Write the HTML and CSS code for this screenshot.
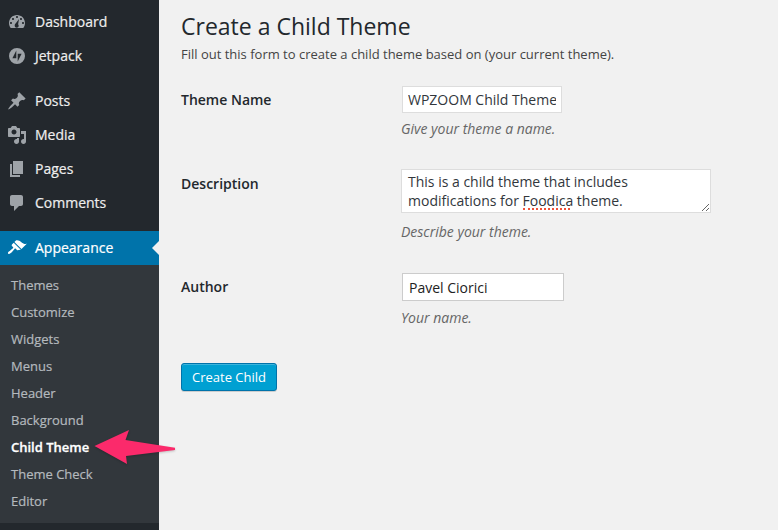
FILE: index.html
```html
<!DOCTYPE html>
<html lang="en">
<head>
<meta charset="utf-8">
<title>Create a Child Theme</title>
<link rel="stylesheet" href="styles.css">
</head>
<body>
<div class="layout">
  <nav class="sidebar">
    <ul class="menu">
      <li class="item"><svg class="icon" viewBox="0 0 20 20"><path d="M3.76 16h12.48c1.1-1.37 1.76-3.11 1.76-5 0-4.42-3.58-8-8-8s-8 3.58-8 8c0 1.89.66 3.63 1.76 5zM10 4c.55 0 1 .45 1 1s-.45 1-1 1-1-.45-1-1 .45-1 1-1zM6 6c.55 0 1 .45 1 1s-.45 1-1 1-1-.45-1-1 .45-1 1-1zm8 0c.55 0 1 .45 1 1s-.45 1-1 1-1-.45-1-1 .45-1 1-1zm-5.37 5.55L12 7l-.89 5.28c.36.35.59.86.59 1.42 0 1.1-.9 2-2 2s-2-.9-2-2 .4-1.7.93-2.15zM4 10c.55 0 1 .45 1 1s-.45 1-1 1-1-.45-1-1 .45-1 1-1zm12 0c.55 0 1 .45 1 1s-.45 1-1 1-1-.45-1-1 .45-1 1-1z" fill-rule="evenodd"/></svg>Dashboard</li>
      <li class="item"><svg class="icon" viewBox="0 0 20 20"><path d="M10 2a8 8 0 1 0 0 16 8 8 0 0 0 0-16zM9.300 4.500v7.700H5.400zM10.700 15.500V7.800h3.900z" fill-rule="evenodd"/></svg>Jetpack</li>
      <li class="sep"></li>
      <li class="item"><svg class="icon" viewBox="0 0 20 20"><path d="M10.44 3.02l1.82-1.82 6.36 6.35-1.83 1.82c-1.05-.68-2.48-.57-3.41.36l-.75.75c-.92.93-1.04 2.35-.35 3.41l-1.83 1.82-2.41-2.41-2.8 2.79c-.42.42-3.38 2.71-3.8 2.29s1.86-3.39 2.28-3.81l2.79-2.79L4.1 9.36l1.83-1.82c1.05.69 2.48.57 3.4-.36l.75-.75c.93-.92 1.05-2.35.36-3.41z"/></svg>Posts</li>
      <li class="item"><svg class="icon" viewBox="0 0 20 20"><path d="M13 11V4c0-.55-.45-1-1-1h-1.67L9 1H5L3.67 3H2c-.55 0-1 .45-1 1v7c0 .55.45 1 1 1h10c.55 0 1-.45 1-1zM7 4.500c1.38 0 2.500 1.12 2.500 2.500S8.380 9.500 7 9.500 4.500 8.380 4.500 7 5.620 4.500 7 4.500zM14 6h5v10.500c0 1.38-1.12 2.500-2.500 2.500S14 17.880 14 16.500s1.120-2.500 2.500-2.500c.17 0 .34.02.5.05V9h-3V6zm-4 8.050V13h2v3.500c0 1.38-1.12 2.500-2.500 2.500S7 17.880 7 16.500 8.120 14 9.500 14c.17 0 .34.02.5.05z" fill-rule="evenodd"/></svg>Media</li>
      <li class="item"><svg class="icon" viewBox="0 0 20 20"><path d="M6 15V2h10v13H6zm-1 1h8v2H3V5h2v11z"/></svg>Pages</li>
      <li class="item"><svg class="icon" viewBox="0 0 20 20"><path d="M5 2h9c1.1 0 2 .9 2 2v7c0 1.1-.9 2-2 2h-2l-5 5v-5H5c-1.1 0-2-.9-2-2V4c0-1.1.9-2 2-2z"/></svg>Comments</li>
      <li class="sep"></li>
      <li class="item current"><svg class="icon" viewBox="0 0 20 20"><path d="M14.480 11.060L7.410 3.990l1.500-1.500c.5-.56 2.300-.47 3.510.32 1.210.8 1.430 1.280 2.910 2.100 1.180.64 2.450 1.260 4.450.85zm-.71.71L6.700 4.700 4.930 6.470c-.39.39-.39 1.020 0 1.410l1.060 1.060c.39.39.39 1.030 0 1.420-.6.6-1.430 1.110-2.210 1.690-.35.26-.7.53-1.010.84C1.430 13.230.4 14.790 1.240 15.630c.84.84 2.400-.2 3.740-1.530.31-.31.58-.66.84-1.010.58-.78 1.090-1.610 1.690-2.210.39-.39 1.030-.39 1.420 0l1.060 1.060c.39.39 1.020.39 1.410 0z"/></svg>Appearance<span class="notch"></span></li>
    </ul>
    <ul class="submenu">
      <li>Themes</li>
      <li>Customize</li>
      <li>Widgets</li>
      <li>Menus</li>
      <li>Header</li>
      <li>Background</li>
      <li class="active">Child Theme</li>
      <li>Theme Check</li>
      <li>Editor</li>
    </ul>
  </nav>
  <main class="content">
    <h1 class="title">Create a Child Theme</h1>
    <p class="intro">Fill out this form to create a child theme based on (your current theme).</p>
    <form class="form">
      <div class="row row-name">
        <label class="label">Theme Name</label>
        <div class="field">
          <input class="input input-name" type="text" value="WPZOOM Child Theme">
          <p class="hint">Give your theme a name.</p>
        </div>
      </div>
      <div class="row row-desc">
        <label class="label">Description</label>
        <div class="field">
          <div class="area-wrap">
            <textarea class="area" spellcheck="false">This is a child theme that includes modifications for Foodica theme.</textarea>
            <span class="squiggle"></span>
          </div>
          <p class="hint hint-desc">Describe your theme.</p>
        </div>
      </div>
      <div class="row row-author">
        <label class="label">Author</label>
        <div class="field">
          <input class="input input-author" type="text" value="Pavel Ciorici">
          <p class="hint">Your name.</p>
        </div>
      </div>
      <button class="button" type="button">Create Child</button>
    </form>
  </main>
</div>
<svg class="arrow" viewBox="0 0 90 40" width="90" height="40"><path d="M.5 17L35 1l-3.500 10L81 18.800V21l-49 6 1 8Z"/></svg>
</body>
</html>
```
FILE: styles.css
```css
* { box-sizing: border-box; }
html, body { margin: 0; padding: 0; height: 100%; overflow: hidden; }
body {
  background: #f1f1f1;
  color: #444;
  font-family: "Open Sans", sans-serif;
  font-size: 13px;
  line-height: 1.4;
}
.layout { display: flex; min-height: 530px; }
.sidebar {
  flex: 0 0 159px;
  width: 159px;
  height: 530px;
  background: #23282d;
  padding-top: 5px;
}
.menu, .submenu { list-style: none; margin: 0; padding: 0; }
.item {
  position: relative;
  display: flex;
  align-items: center;
  height: 34px;
  padding-left: 7px;
  color: #eee;
  font-size: 14px;
  font-weight: 400;
  -webkit-text-stroke: .2px;
}
.icon {
  flex: 0 0 20px;
  width: 20px;
  height: 20px;
  margin-right: 8px;
  fill: #9ea3a8;
}
.sep { height: 11px; }
.item.current { background: #0073aa; color: #fff; }
.item.current .icon { fill: #fff; }
.notch {
  position: absolute;
  right: 0;
  top: 10px;
  border: 7px solid transparent;
  border-right-color: #f1f1f1;
  border-left-width: 0;
}
.submenu {
  background: #32373c;
  padding: 7px 0 8px;
}
.submenu li {
  height: 27px;
  line-height: 27px;
  padding-left: 11px;
  color: #b4b9be;
  font-size: 13px;
  -webkit-text-stroke: .2px;
}
.submenu li.active { color: #fff; font-weight: 600; -webkit-text-stroke: .3px; }
.content { flex: 1; padding: 12px 0 0 22px; }
.title {
  margin: 0;
  font-size: 23px;
  font-weight: 400;
  line-height: 29px;
  color: #23282d;
}
.intro { margin: 3px 0 0; font-size: 13px; line-height: 20px; color: #444; }
.form { display: flex; flex-direction: column; align-items: flex-start; }
.row { display: grid; grid-template-columns: 220px 1fr; width: 100%; }
.row-name { margin-top: 22px; height: 83px; }
.row-desc { height: 104px; }
.row-author { height: 90px; }
.label { font-size: 14px; font-weight: 600; color: #23282d; padding-top: 4px; line-height: 20px; }
.row-desc .label { padding-top: 5px; }
.field { min-width: 0; }
.input {
  display: block;
  height: 27px;
  margin-left: 1px;
  padding: 0 5px;
  border: 1px solid #ddd;
  background: #fff;
  color: #32373c;
  font-family: "Open Sans", sans-serif;
  font-size: 14px;
  outline: 0;
}
.input-name { width: 160px; }
.input-author { width: 162px; height: 28px; border-color: #ccc; padding: 0 6px; color: #222; }
.area-wrap { position: relative; width: 310px; height: 44px; }
.area {
  display: block;
  width: 310px;
  height: 44px;
  padding: 2px 6px;
  border: 1px solid #ddd;
  background: #fff;
  color: #32373c;
  font-family: "Open Sans", sans-serif;
  font-size: 14px;
  line-height: 19px;
  resize: both;
  overflow: hidden;
  outline: 0;
}
.squiggle {
  position: absolute;
  left: 122px;
  top: 39px;
  width: 47px;
  border-bottom: 2px dotted #f0523a;
}
.hint { margin: 6px 0 0; font-style: italic; font-size: 14px; line-height: 19px; color: #666; }
.hint-desc { margin-top: 9px; }
.row-author .hint { margin-top: 7px; }
.button {
  height: 28px;
  width: 96px;
  padding: 0;
  border: 1px solid #0073aa;
  border-radius: 3px;
  background: #00a0d2;
  color: #fff;
  font-family: "Open Sans", sans-serif;
  font-size: 13px;
  box-shadow: inset 0 1px 0 rgba(120,200,230,.5), 0 1px 0 rgba(0,0,0,.15);
}
.arrow {
  position: absolute;
  left: 94px;
  top: 429px;
  fill: #fb2a6b;
  filter: drop-shadow(0 1px 1px rgba(0,0,0,.2));
}
```
